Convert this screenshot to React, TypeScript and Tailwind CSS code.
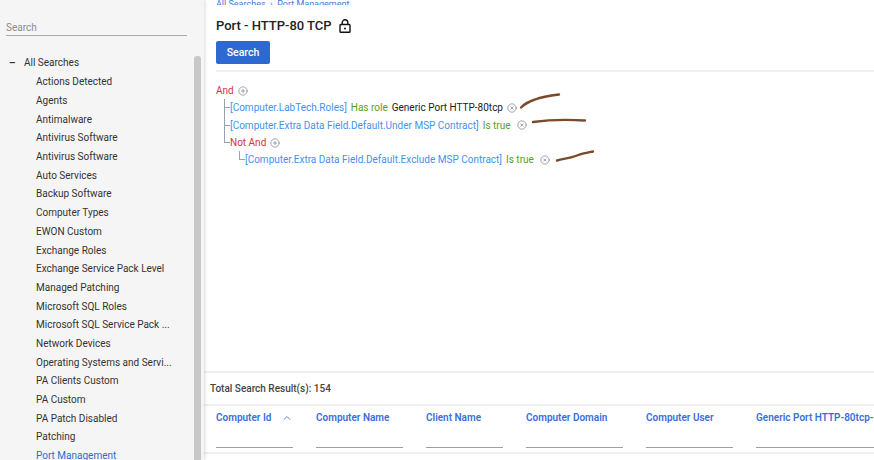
import { ChevronUp, CirclePlus, CircleX } from 'lucide-react';

const searches = [
  'Actions Detected',
  'Agents',
  'Antimalware',
  'Antivirus Software',
  'Antivirus Software',
  'Auto Services',
  'Backup Software',
  'Computer Types',
  'EWON Custom',
  'Exchange Roles',
  'Exchange Service Pack Level',
  'Managed Patching',
  'Microsoft SQL Roles',
  'Microsoft SQL Service Pack ...',
  'Network Devices',
  'Operating Systems and Servi...',
  'PA Clients Custom',
  'PA Custom',
  'PA Patch Disabled',
  'Patching',
  'Port Management',
];

const columns = [
  { label: 'Computer Id', width: 'w-[77px]', sorted: true },
  { label: 'Computer Name', width: 'w-[87px]' },
  { label: 'Client Name', width: 'w-[77px]' },
  { label: 'Computer Domain', width: 'w-[97px]' },
  { label: 'Computer User', width: 'w-[87px]' },
  { label: 'Generic Port HTTP-80tcp-', width: 'w-[130px]' },
];

// Branch of the query tree: "last" stops the vertical line at the row's middle
const Connector = ({ last }: { last?: boolean }) =>
  last ? (
    <span className="h-[9px] w-[6px] shrink-0 self-start border-b border-l border-gray-400" />
  ) : (
    <span className="flex w-[6px] shrink-0 items-center self-stretch border-l border-gray-400">
      <span className="w-full border-b border-gray-400" />
    </span>
  );

const Field = ({ children }: { children: string }) => (
  <span className="text-[#4392f1]">{children}</span>
);

const Op = ({ children }: { children: string }) => (
  <span className="text-[#5a9e1e]">{children}</span>
);

const Remove = () => <CircleX size={10} strokeWidth={1.5} className="shrink-0 text-gray-500" />;

const Add = () => <CirclePlus size={10} strokeWidth={1.5} className="shrink-0 text-gray-500" />;

export default function App() {
  return (
    <div className="relative flex h-[460px] w-[874px] overflow-hidden bg-white font-['Roboto',sans-serif] text-[10px] text-[#333]">
      {/* Sidebar */}
      <aside className="relative flex w-[204px] shrink-0 flex-col overflow-hidden bg-[#f5f5f5] shadow-[1px_0_3px_rgba(0,0,0,0.15)]">
        <div className="mx-[6px] mt-[20px] flex h-[18px] w-[181px] items-center border-b border-[#a8a8a8] text-[#8c8c8c]">
          Search
        </div>
        <div className="mt-[19px] flex h-[19px] items-center pl-[9px]">
          <span className="w-[15px] font-bold">–</span>
          <span>All Searches</span>
        </div>
        <ul className="mt-[2.5px] flex flex-col">
          {searches.map((name, i) => (
            <li
              key={i}
              className={`flex h-[18.7px] items-center pl-[36px] ${
                name === 'Port Management' ? 'text-[#2f6bd0]' : ''
              }`}
            >
              {name}
            </li>
          ))}
        </ul>
        {/* Scrollbar thumb */}
        <div className="absolute left-[194px] top-[56px] h-[420px] w-[7px] rounded-[3px] bg-[#c8c8c8]" />
      </aside>

      {/* Main */}
      <main className="flex min-w-0 flex-1 flex-col">
        <div className="flex h-[5px] items-end overflow-hidden pl-[12px] text-[9px] leading-[10px] text-[#3f78d8]">
          <span className="translate-y-[4px]">All Searches &nbsp;›&nbsp; Port Management</span>
        </div>

        <div className="mt-[12px] flex h-[18px] items-center pl-[12px]">
          <h1 className="text-[13px] font-medium text-[#222]">Port - HTTP-80 TCP</h1>
          <svg viewBox="0 0 12 14" className="ml-[7px] h-[14px] w-[12px]" fill="none" stroke="#111" strokeWidth="1.4">
            <path d="M3.2 5.5V3.6a2.8 2.8 0 0 1 5.6 0v1.9" />
            <rect x="1" y="5.5" width="10" height="7.8" rx="0.8" />
            <circle cx="6" cy="9.4" r="1" fill="#111" stroke="none" />
          </svg>
        </div>

        <div className="pl-[12px] pt-[6px]">
          <button className="h-[23px] w-[54px] rounded-[2px] bg-[#2e69d1] text-[10.5px] font-medium text-white">
            Search
          </button>
        </div>

        <div className="ml-[12px] mt-[6px] border-b-2 border-[#f0f0f0]" />

        {/* Query tree */}
        <div className="flex h-[299px] flex-col pl-[12px] pt-[10px]">
          <div className="flex h-[17px] items-center gap-[4px]">
            <span className="text-[#d0343f]">And</span>
            <Add />
          </div>
          <div className="ml-[8px] flex flex-col">
            <div className="flex h-[17.5px] items-center">
              <Connector />
              <span className="flex items-center gap-[4px] whitespace-nowrap">
                <Field>[Computer.LabTech.Roles]</Field>
                <Op>Has role</Op>
                <span className="text-[#222]">Generic Port HTTP-80tcp</span>
                <Remove />
              </span>
            </div>
            <div className="flex h-[17.5px] items-center">
              <Connector />
              <span className="flex items-center gap-[4px] whitespace-nowrap">
                <Field>[Computer.Extra Data Field.Default.Under MSP Contract]</Field>
                <Op>Is true</Op>
                <span className="ml-[2px]">
                  <Remove />
                </span>
              </span>
            </div>
            <div className="flex h-[17px] items-center">
              <Connector last />
              <span className="text-[#d0343f]">Not And</span>
              <span className="ml-[4px]">
                <Add />
              </span>
            </div>
            <div className="ml-[15px] flex h-[17px] items-center">
              <Connector last />
              <span className="flex items-center gap-[4px] whitespace-nowrap">
                <Field>[Computer.Extra Data Field.Default.Exclude MSP Contract]</Field>
                <Op>Is true</Op>
                <span className="ml-[2px]">
                  <Remove />
                </span>
              </span>
            </div>
          </div>
        </div>

        {/* Results */}
        <div className="flex h-[35px] items-center border-y-2 border-[#f0f0f0] pl-[6px] font-medium text-[#444]">
          Total Search Result(s): 154
        </div>
        <div className="flex gap-[23px] overflow-hidden pl-[12px]">
          {columns.map((col) => (
            <div key={col.label} className={`${col.width} flex h-[42px] shrink-0 flex-col justify-between pt-[4px]`}>
              <div className="flex items-center justify-between whitespace-nowrap font-semibold text-[#3a6fd8]">
                <span>{col.label}</span>
                {col.sorted && <ChevronUp size={12} strokeWidth={2} className="text-[#5a86dc]" />}
              </div>
              <div className="border-b border-[#a0a0a0]" />
            </div>
          ))}
        </div>
        <div className="mt-[4px] border-t-2 border-[#f0f0f0]" />
      </main>

      {/* Pen marks drawn over the screenshot */}
      <svg
        viewBox="0 0 874 460"
        className="pointer-events-none absolute left-0 top-0 h-[460px] w-[874px]"
        fill="none"
        stroke="#7b4a2b"
        strokeWidth="2.4"
        strokeLinecap="round"
      >
        <path d="M521 107.500c3-3 8-6 14-8 8-3 16-4 24-5" />
        <path d="M533 122c14-2 36-2.500 52-1.500" />
        <path d="M557 160.500c6-2 13-2 20-5 5-2 11-3 16-4" />
      </svg>
    </div>
  );
}
